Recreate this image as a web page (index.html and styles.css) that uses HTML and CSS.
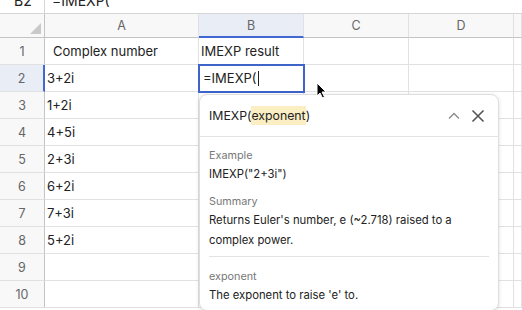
FILE: index.html
```html
<!DOCTYPE html>
<html lang="en">
<head>
    <meta charset="UTF-8">
    <meta name="viewport" content="width=device-width, initial-scale=1.0">
    <title>IMEXP</title>
    <link rel="stylesheet" href="styles.css">
</head>
<body>

    <div class="formula-bar">
        <div class="name-box"><span>B2</span></div>
        <div class="fx-input"><span>=IMEXP(</span></div>
    </div>

    <div class="sheet">
        <div class="corner"><div class="corner-tri"></div></div>
        <div class="col-head">A</div>
        <div class="col-head selected">B</div>
        <div class="col-head">C</div>
        <div class="col-head">D</div>
        <div class="col-head"></div>

        <div class="row-head">1</div>
        <div class="cell first">Complex number</div>
        <div class="cell">IMEXP result</div>
        <div class="cell"></div><div class="cell"></div><div class="cell"></div>

        <div class="row-head selected">2</div>
        <div class="cell">3+2i</div>
        <div class="cell active">=IMEXP(<span class="caret"></span></div>
        <div class="cell"></div><div class="cell"></div><div class="cell"></div>

        <div class="row-head">3</div>
        <div class="cell">1+2i</div>
        <div class="cell"></div><div class="cell"></div><div class="cell"></div><div class="cell"></div>

        <div class="row-head">4</div>
        <div class="cell">4+5i</div>
        <div class="cell"></div><div class="cell"></div><div class="cell"></div><div class="cell"></div>

        <div class="row-head">5</div>
        <div class="cell">2+3i</div>
        <div class="cell"></div><div class="cell"></div><div class="cell"></div><div class="cell"></div>

        <div class="row-head">6</div>
        <div class="cell">6+2i</div>
        <div class="cell"></div><div class="cell"></div><div class="cell"></div><div class="cell"></div>

        <div class="row-head">7</div>
        <div class="cell">7+3i</div>
        <div class="cell"></div><div class="cell"></div><div class="cell"></div><div class="cell"></div>

        <div class="row-head">8</div>
        <div class="cell">5+2i</div>
        <div class="cell"></div><div class="cell"></div><div class="cell"></div><div class="cell"></div>

        <div class="row-head">9</div>
        <div class="cell"></div><div class="cell"></div><div class="cell"></div><div class="cell"></div><div class="cell"></div>

        <div class="row-head">10</div>
        <div class="cell"></div><div class="cell"></div><div class="cell"></div><div class="cell"></div><div class="cell"></div>
    </div>

    <!-- formula help popup -->
    <div class="help">
        <div class="help-head">
            <div class="help-title">IMEXP(<span class="arg">exponent</span>)</div>
            <div class="help-icons">
                <svg width="14" height="14" viewBox="0 0 14 14"><path d="M2 9.5 L7 4.5 L12 9.5" fill="none" stroke="#8a8a8a" stroke-width="1.3"/></svg>
                <svg width="14" height="14" viewBox="0 0 14 14"><path d="M1.5 1.5 L12.5 12.5 M12.5 1.5 L1.5 12.5" fill="none" stroke="#555" stroke-width="1.6"/></svg>
            </div>
        </div>
        <div class="help-body">
            <div class="help-section">
                <div class="help-label">Example</div>
                <div class="help-text">IMEXP("2+3i")</div>
            </div>
            <div class="help-section">
                <div class="help-label">Summary</div>
                <div class="help-text">Returns Euler's number, e (~2.718) raised to a complex power.</div>
            </div>
        </div>
        <div class="help-divider"></div>
        <div class="help-body args">
            <div class="help-section">
                <div class="help-label">exponent</div>
                <div class="help-text">The exponent to raise 'e' to.</div>
            </div>
        </div>
    </div>

    <svg class="pointer" width="12" height="17" viewBox="0 0 12 17">
        <path d="M1 1 L1 14 L4 11 L6.5 16 L8.5 15 L6 10 L10 10 Z" fill="#000" stroke="#fff" stroke-width="1"/>
    </svg>

</body>
</html>
```

FILE: styles.css
```css
body {
    font-family: Inter, "Noto Sans", sans-serif;
    font-size: 13px;
    color: #222;
    background-color: #fff;
    margin: 0;
    width: 522px;
    height: 310px;
    overflow: hidden;
    position: relative;
}
.formula-bar {
    display: flex;
    height: 13px;
    border-bottom: 1px solid #d6d6d6;
    overflow: hidden;
    font-size: 14px;
}
.name-box, .fx-input {
    display: flex;
    align-items: flex-end;
    padding-bottom: 4px;
    box-sizing: border-box;
    line-height: 16px;
}
.name-box {
    width: 45px;
    padding-left: 14px;
    border-right: 1px solid #d6d6d6;
}
.fx-input {
    padding-left: 7px;
}
.sheet {
    display: grid;
    grid-template-columns: 45px 154px 105px 105px 105px 1fr;
    grid-template-rows: 24px repeat(10, 27px);
    height: 296px;
    overflow: hidden;
}
.corner, .col-head, .row-head, .cell {
    box-sizing: border-box;
    border-right: 1px solid #e1e1e1;
    border-bottom: 1px solid #e1e1e1;
}
.corner {
    background-color: #f8f8f8;
    border-right-color: #c4c4c4;
    border-bottom-color: #c4c4c4;
    position: relative;
}
.corner-tri {
    position: absolute;
    right: 3px;
    bottom: 3px;
    width: 0;
    height: 0;
    border-left: 11px solid transparent;
    border-bottom: 11px solid #c9c9c9;
}
.col-head {
    background-color: #f8f8f8;
    border-bottom-color: #c4c4c4;
    color: #666;
    font-size: 12.5px;
    display: flex;
    align-items: center;
    justify-content: center;
}
.col-head.selected {
    background-color: #e8edf6;
    border-bottom: 2px solid #4068d0;
}
.row-head {
    background-color: #f8f8f8;
    border-right-color: #c4c4c4;
    color: #666;
    font-size: 12.5px;
    display: flex;
    align-items: center;
    justify-content: center;
}
.row-head.selected {
    background-color: #e8edf6;
    border-right: 2px solid #4068d0;
}
.cell {
    display: flex;
    align-items: center;
    padding-left: 2px;
    white-space: nowrap;
    overflow: hidden;
}
.cell.first {
    padding-left: 8px;
}
.cell.active {
    padding-left: 4px;
    outline: 2px solid #3e63c9;
    outline-offset: -1px;
    overflow: visible;
    position: relative;
    z-index: 1;
}
.caret {
    display: inline-block;
    width: 1px;
    height: 15px;
    margin-left: 1px;
    background-color: #222;
}
.help {
    position: absolute;
    left: 199px;
    top: 94px;
    width: 300px;
    height: 217px;
    box-sizing: border-box;
    background-color: #fff;
    border: 1px solid #dedede;
    border-radius: 8px;
    box-shadow: 0 1px 4px rgba(0, 0, 0, 0.12);
    overflow: hidden;
    z-index: 2;
}
.help-head {
    display: flex;
    align-items: center;
    justify-content: space-between;
    height: 41px;
    padding: 0 13px 0 9px;
    border-bottom: 1px solid #e3e3e3;
    font-size: 12.3px;
}
.arg {
    background-color: #faeec2;
    padding: 2px 0;
}
.help-icons {
    display: flex;
    gap: 10px;
}
.help-body {
    padding: 11px 9px 6px;
    display: flex;
    flex-direction: column;
    gap: 10px;
}
.help-body.args {
    padding-top: 12px;
}
.help-label {
    color: #777;
    font-size: 10.8px;
    line-height: 16px;
}
.help-text {
    font-size: 11.3px;
    line-height: 20px;
}
.help-divider {
    height: 1px;
    margin: 0 9px;
    background-color: #e3e3e3;
}
.pointer {
    position: absolute;
    left: 316px;
    top: 82px;
    z-index: 3;
}
```
